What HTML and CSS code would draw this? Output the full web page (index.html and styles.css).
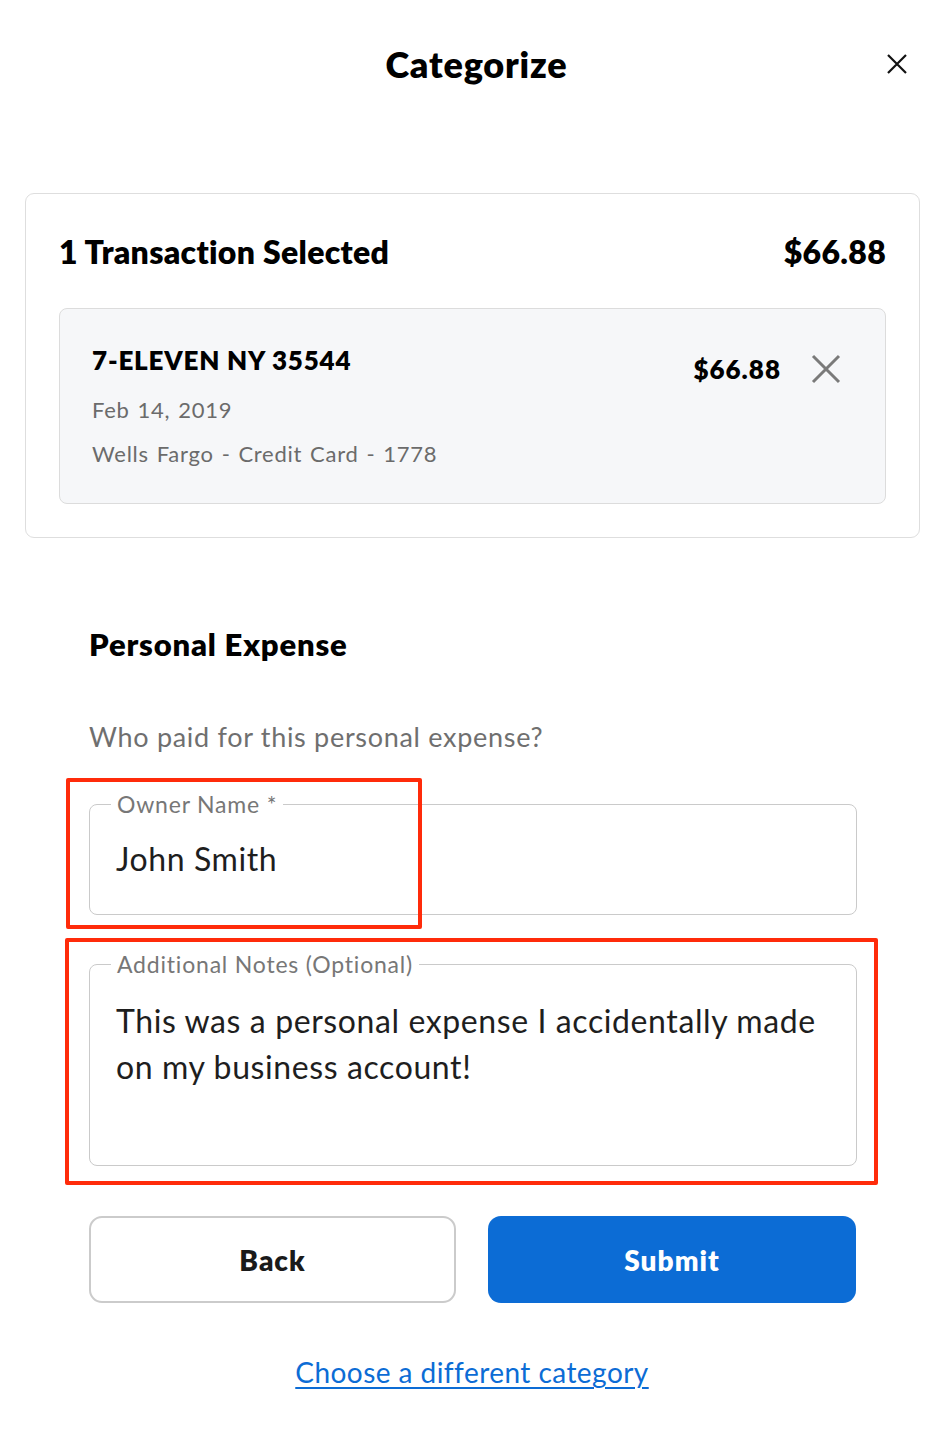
FILE: index.html
```html
<!DOCTYPE html>
<html>
<head>
<meta charset="utf-8">
<link rel="stylesheet" href="styles.css">
</head>
<body>
<div class="modal">
  <header class="head">
    <h1 class="title">Categorize</h1>
    <button class="close" aria-label="Close">
      <svg width="22" height="22" viewBox="0 0 22 22"><path d="M2 2L20 20M20 2L2 20" stroke="#111" stroke-width="2.2" fill="none"/></svg>
    </button>
  </header>

  <section class="summary">
    <div class="summary-row">
      <span class="summary-label">1 Transaction Selected</span>
      <span class="summary-amount">$66.88</span>
    </div>
    <div class="txn">
      <div class="txn-info">
        <div class="txn-name">7-ELEVEN NY 35544</div>
        <div class="txn-meta">Feb 14, 2019</div>
        <div class="txn-meta">Wells Fargo - Credit Card - 1778</div>
      </div>
      <div class="txn-right">
        <span class="txn-amount">$66.88</span>
        <svg class="txn-x" width="30" height="30" viewBox="0 0 30 30"><path d="M2 2L28 28M28 2L2 28" stroke="#7a7a7a" stroke-width="3" fill="none"/></svg>
      </div>
    </div>
  </section>

  <section class="form">
    <h2 class="form-title">Personal Expense</h2>
    <p class="question">Who paid for this personal expense?</p>
    <div class="fields">
      <fieldset class="field field-name">
        <legend>Owner Name *</legend>
        <div class="value">John Smith</div>
      </fieldset>
      <fieldset class="field field-notes">
        <legend>Additional Notes (Optional)</legend>
        <div class="value">This was a personal expense I accidentally made on my business account!</div>
      </fieldset>
      <div class="mark mark-1"></div>
      <div class="mark mark-2"></div>
    </div>
    <div class="actions">
      <button class="btn btn-back">Back</button>
      <button class="btn btn-submit">Submit</button>
    </div>
    <div class="link-row"><a class="link" href="#">Choose a different category</a></div>
  </section>
</div>
</body>
</html>
```

FILE: styles.css
```css
* { box-sizing: border-box; }
html, body { margin: 0; padding: 0; background: #fff; }
body { font-family: "Lato", "Noto Sans", sans-serif; color: #000; }

.modal { width: 938px; padding: 0 18px 0 25px; }

.head { position: relative; height: 130px; display: flex; justify-content: center; align-items: flex-start; padding-left: 8px; }
.title { margin: 39px 0 0; font-size: 36px; font-weight: 800; line-height: 50px; letter-spacing: 0.8px; }
.close { position: absolute; right: 12px; top: 53px; background: none; border: 0; padding: 0; width: 22px; height: 22px; }

.summary { margin-top: 63px; border: 1.5px solid #dedede; border-radius: 9px; padding: 32px 33px 33px 33px; }
.summary-row { display: flex; justify-content: space-between; align-items: center; height: 50px; margin-bottom: 32px; }
.summary-label, .summary-amount { font-size: 32px; font-weight: 800; letter-spacing: 0.3px; }
.txn { background: #f6f7f9; border: 1.5px solid #dcdcdc; border-radius: 8px; height: 196px; padding: 34px 44px 0 32px; display: flex; justify-content: space-between; }
.txn-name { font-size: 26px; font-weight: 800; line-height: 34px; margin-bottom: 11px; letter-spacing: 0.8px; }
.txn-meta { font-size: 22px; color: #6b6b6b; line-height: 44px; letter-spacing: 0.75px; word-spacing: 1.5px; }
.txn-right { display: flex; align-items: center; height: 42px; gap: 30px; margin-top: 5px; }
.txn-amount { font-size: 26px; font-weight: 800; letter-spacing: 1px; }

.form { padding: 0 63px 0 64px; }
.form-title { margin: 86px 0 0; font-size: 31px; font-weight: 800; line-height: 40px; letter-spacing: 0.8px; }
.question { margin: 56px 0 0; font-size: 27px; color: #6f6f6f; line-height: 34px; letter-spacing: 0.7px; }

.fields { position: relative; margin-top: 37px; }
.field { margin: 0; border: 1.5px solid #cacaca; border-radius: 8px; padding: 0 26px; min-width: 0; }
.field legend { padding: 0 6px; margin-left: -5px; font-size: 23px; color: #777; line-height: 26px; letter-spacing: 0.8px; }
.field .value { font-size: 32px; color: #1e1e1e; letter-spacing: 0.6px; }
.field-name { height: 124px; }
.field-name .value { margin-top: 19px; line-height: 46px; }
.field-notes { height: 215px; margin-top: 36px; }
.field-notes .value { margin-top: 21px; line-height: 46px; }

.mark { position: absolute; border: 4px solid #ff2b0a; border-radius: 2px; }
.mark-1 { left: -23px; top: -13px; width: 356px; height: 151px; }
.mark-2 { left: -24px; top: 147px; width: 813px; height: 247px; }

.actions { display: flex; gap: 32px; margin-top: 50px; }
.btn { height: 87px; border-radius: 13px; font-family: inherit; font-size: 28px; font-weight: 800; letter-spacing: 1px; cursor: pointer; }
.btn-back { width: 367px; background: #fff; border: 2px solid #cbcbcb; color: #1a1a1a; }
.btn-submit { width: 368px; background: #0c6cd5; border: 0; color: #fff; }

.link-row { text-align: center; margin-top: 52px; padding-right: 2px; }
.link { font-size: 28px; color: #0c6cd5; letter-spacing: 0.45px; text-decoration: underline; text-underline-offset: 4px; text-decoration-thickness: 2px; }
```
